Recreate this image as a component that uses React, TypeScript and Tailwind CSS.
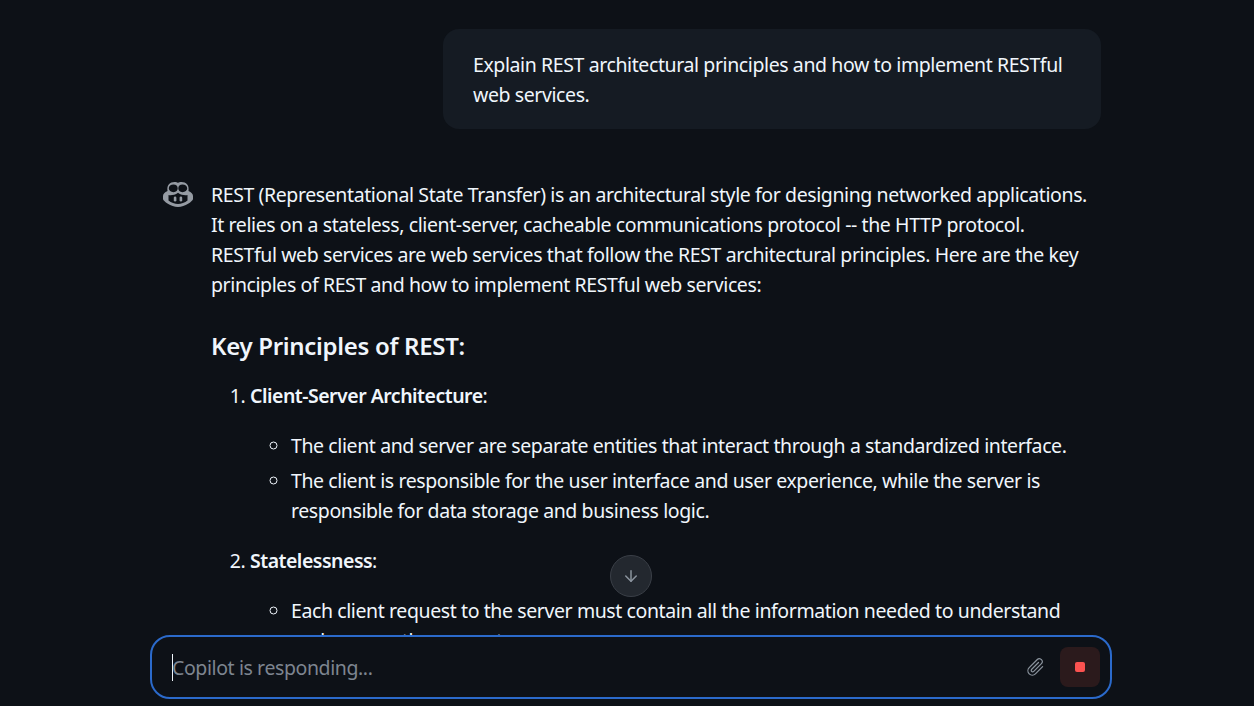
import { ArrowDown } from "lucide-react";
import { GoPaperclip } from "react-icons/go";

const CopilotMark = () => (
  <svg viewBox="0 0 30 25" className="mt-[2px] h-[25px] w-[30px] shrink-0 text-[#959ba3]" fill="currentColor">
    <path
      fillRule="evenodd"
      d="M4.500 9C3.500 3 7 0 11.500 0c1.500 0 2.800.300 3.500 1 .7-.7 2-1 3.500-1C23 0 26.500 3 25.500 9c2.800 1 4.500 3 4.500 5v3c0 2-8 8-15 8S0 19 0 17v-3c0-2 1.700-4 4.500-5ZM10.500 2.500C7.800 2.500 5.800 4.200 5.800 6.300s2 3.900 4.700 3.900 4.200-1.800 4.200-3.900-1.500-3.800-4.200-3.800Zm9 0c-2.700 0-4.200 1.700-4.200 3.800s1.500 3.900 4.200 3.900 4.700-1.800 4.700-3.900-2-3.800-4.700-3.800ZM5.500 13v5.500C8 20.500 12 22 15 22s7-1.500 9.500-3.500V13c-2.500.5-6.500 0-9.500-2.300C12 13 8 13.500 5.500 13Z"
    />
    <rect x="10.800" y="14.500" width="2.600" height="5" rx="1.300" />
    <rect x="16.600" y="14.500" width="2.600" height="5" rx="1.300" />
  </svg>
);

const App = () => {
  return (
    <div className="flex h-[706px] w-full flex-col overflow-hidden bg-[#0d1117] pl-2 font-['Noto_Sans','Open_Sans',sans-serif] text-[19.5px] leading-[30px] tracking-[-0.4px] text-[#f0f6fc]">
      <div className="relative min-h-0 flex-1">
        <div className="h-full overflow-hidden">
          <div className="mx-auto w-[962px] pt-[29px]">
            <div className="flex justify-end pr-[11px]">
              <div className="w-[658px] rounded-2xl bg-[#151b23] px-[30px] pb-[19px] pt-[21px]">
                Explain REST architectural principles and how to implement RESTful web services.
              </div>
            </div>
            <div className="mt-[51px] flex gap-[18px] pl-[13px] pr-[20px]">
              <CopilotMark />
              <div className="min-w-0 flex-1">
                <p>
                  REST (Representational State Transfer) is an architectural style for designing networked applications. It relies on a stateless, client-server, cacheable communications protocol -- the HTTP protocol. RESTful web services are web services that follow the REST architectural principles. Here are the key principles of REST and how to implement RESTful web services:
                </p>
                <h3 className="mb-[17px] mt-[28px] text-[24px] font-semibold leading-[36px] tracking-[-0.3px]">Key Principles of REST:</h3>
                <ol className="list-decimal pl-[39px]">
                  <li>
                    <p><strong className="font-semibold tracking-[-0.5px]">Client-Server Architecture</strong>:</p>
                    <ul className="mt-5 list-[circle] pl-[41px]">
                      <li>The client and server are separate entities that interact through a standardized interface.</li>
                      <li className="mt-[5px]">The client is responsible for the user interface and user experience, while the server is responsible for data storage and business logic.</li>
                    </ul>
                  </li>
                  <li className="mt-5">
                    <p><strong className="font-semibold tracking-[-0.5px]">Statelessness</strong>:</p>
                    <ul className="mt-5 list-[circle] pl-[41px]">
                      <li>Each client request to the server must contain all the information needed to understand and process the request.</li>
                    </ul>
                  </li>
                </ol>
              </div>
            </div>
          </div>
        </div>
        <button className="absolute bottom-[38px] left-1/2 flex h-[42px] w-[42px] -translate-x-[21px] items-center justify-center rounded-full border border-[#3a3f47] bg-[#23282f] text-[#8b949e]">
          <ArrowDown size={18} />
        </button>
      </div>
      <div className="mx-auto mb-[7px] flex h-[64px] w-[962px] shrink-0 items-center rounded-[20px] border-2 border-[#2b6acb] pl-5 pr-[10px]">
        <span className="h-[27px] w-px shrink-0 bg-[#f0f6fc]" />
        <span className="-ml-px flex-1 pt-[2px] text-[#7d8590]">Copilot is responding...</span>
        <GoPaperclip className="mr-[15px] h-[20px] w-[20px] text-[#8b949e]" />
        <button className="flex h-10 w-10 items-center justify-center rounded-lg bg-[#2b1a1c]">
          <span className="h-[10px] w-[10px] rounded-[2px] bg-[#fb5250]" />
        </button>
      </div>
    </div>
  );
};

export default App;
